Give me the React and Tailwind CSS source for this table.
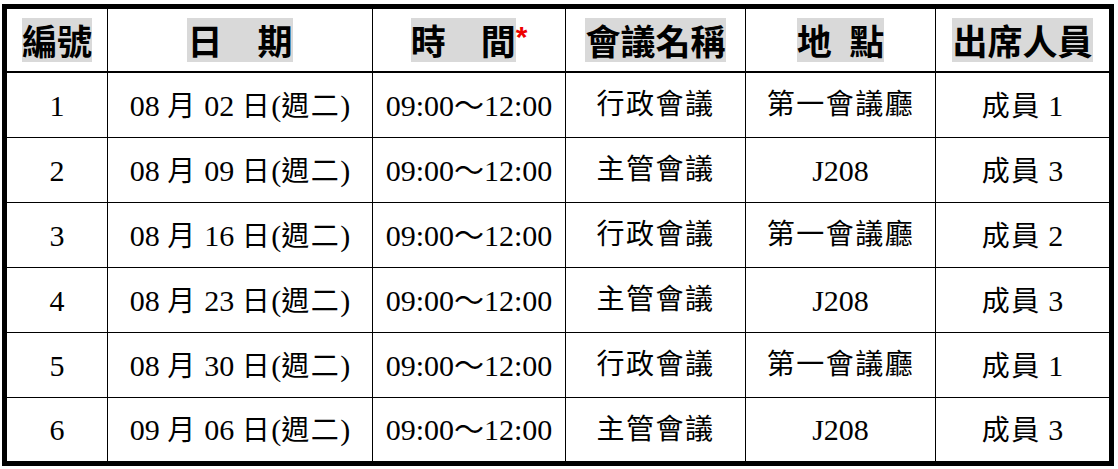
import React from "react";

const rows = [
  ["1", "08", "02", "行政會議", "第一會議廳", "成員 1"],
  ["2", "08", "09", "主管會議", "J208", "成員 3"],
  ["3", "08", "16", "行政會議", "第一會議廳", "成員 2"],
  ["4", "08", "23", "主管會議", "J208", "成員 3"],
  ["5", "08", "30", "行政會議", "第一會議廳", "成員 1"],
  ["6", "09", "06", "主管會議", "J208", "成員 3"],
];

const font = { fontFamily: '"Liberation Serif", "Noto Sans CJK TC", serif' };

function Head({ children, first, extra }) {
  return (
    <div className={`flex items-center justify-center ${first ? "" : "border-l border-black"}`}>
      <span className="bg-[#d9d9d9] text-[35px] leading-[44px] font-bold text-black whitespace-pre" style={{ fontFamily: '"Noto Sans CJK TC", sans-serif' }}>
        {children}
      </span>
      {extra}
    </div>
  );
}

function Cell({ children, first }) {
  return (
    <div className={`flex items-center justify-center text-[30px] text-black whitespace-pre ${first ? "" : "border-l border-black"}`}>
      {children}
    </div>
  );
}

function Cjk({ children }) {
  return <span className="text-[28px] tracking-[1.5px]">{children}</span>;
}

const cols = "grid grid-cols-[100px_265px_193px_180px_190px_174px]";
const heights = ["h-[64px]", "h-[65px] border-t border-black", "h-[65px] border-t border-black", "h-[65px] border-t border-black", "h-[65px] border-t border-black", "h-[64px] border-t border-black"];

export default function App() {
  return (
    <div className="w-[1118px] h-[469px] bg-white pt-[4px] pl-[2px]" style={font}>
      <div className="w-[1112px] border-[5px] border-black">
        <div className={`${cols} h-[64px] border-b-2 border-black`}>
          <Head first>編號</Head>
          <Head>日　期</Head>
          <Head
            extra={
              <span className="self-start mt-[13px] text-[30px] leading-none text-[#ee0000] font-bold" style={{ fontFamily: '"Liberation Sans", sans-serif' }}>
                *
              </span>
            }
          >
            時　間
          </Head>
          <Head>會議名稱</Head>
          <Head>{"地\u2002點"}</Head>
          <Head>出席人員</Head>
        </div>
        {rows.map((r, i) => (
          <div key={i} className={`${cols} ${heights[i]}`}>
            <Cell first>{r[0]}</Cell>
            <Cell>
              <span>
                {r[1]} <Cjk>月</Cjk> {r[2]} <Cjk>日</Cjk>(<Cjk>週二</Cjk>)
              </span>
            </Cell>
            <Cell>09:00～12:00</Cell>
            <Cell>
              <Cjk>{r[3]}</Cjk>
            </Cell>
            <Cell>
              {r[4] === "J208" ? r[4] : <Cjk>{r[4]}</Cjk>}
            </Cell>
            <Cell>
              <span>
                <Cjk>成員</Cjk> {r[5].slice(3)}
              </span>
            </Cell>
          </div>
        ))}
      </div>
    </div>
  );
}
